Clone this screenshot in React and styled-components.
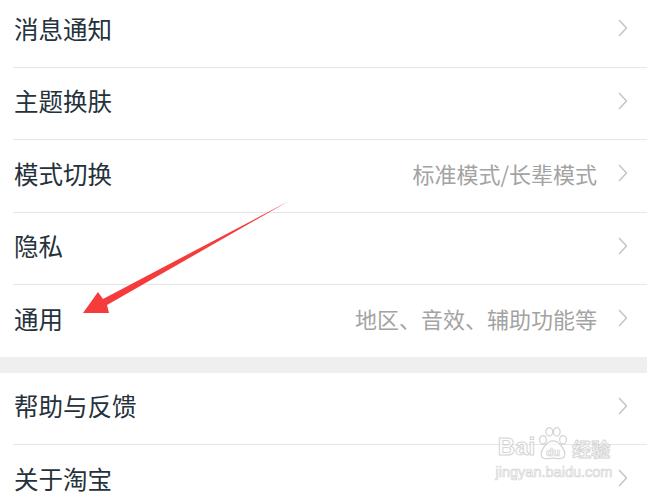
import React from 'react';
import styled, { createGlobalStyle } from 'styled-components';

const GlobalStyle = createGlobalStyle`
  html, body {
    margin: 0;
    padding: 0;
    background: #ffffff;
    overflow: hidden;
  }
  body {
    font-family: "Noto Sans CJK SC", "Noto Sans", sans-serif;
  }
`;

const Page = styled.div`
  position: relative;
  width: 647px;
  height: 498px;
  overflow: hidden;
  background: #ffffff;
`;

const List = styled.div`
  margin-top: -5px;
  display: flex;
  flex-direction: column;
`;

const Group = styled.div`
  display: flex;
  flex-direction: column;
  background: #ffffff;
`;

const Gap = styled.div`
  height: 16px;
  background: #efefef;
`;

const Row = styled.div`
  padding-left: 13px;
`;

const RowInner = styled.div`
  height: 66.5px;
  padding-bottom: 5px;
  display: flex;
  align-items: center;
  padding-right: 19px;
  border-bottom: ${p => (p.last ? 'none' : '1px solid #e6e6e6')};
  box-sizing: content-box;
`;

const Title = styled.span`
  flex: 1;
  font-size: 24.5px;
  color: #25313b;
  padding-left: 1px;
`;

const Hint = styled.span`
  font-size: 22px;
  color: #a3a3a3;
  margin-right: 21px;
`;

const Chevron = () => (
  <svg width="10" height="18" viewBox="0 0 10 18">
    <polyline points="1.5,1.5 8.5,9 1.5,16.5" fill="none" stroke="#c6c6c6" strokeWidth="1.6" strokeLinecap="round" strokeLinejoin="round" />
  </svg>
);

const Overlay = styled.svg`
  position: absolute;
  left: 0;
  top: 0;
  pointer-events: none;
`;

const Watermark = styled.div`
  position: absolute;
  left: 494px;
  top: 426px;
  width: 120px;
  display: flex;
  flex-direction: column;
  align-items: center;
  opacity: 0.7;
  pointer-events: none;
`;

const MarkTop = styled.div`
  display: flex;
  align-items: flex-end;
  font-family: "Liberation Sans", Arial, sans-serif;
  font-weight: 700;
  font-size: 24px;
  line-height: 1;
  color: #ffffff;
  -webkit-text-stroke: 1px #c4c4c4;
`;

const MarkCn = styled.span`
  font-family: "Noto Sans CJK SC", sans-serif;
  font-size: 19px;
  margin-left: 1px;
  margin-bottom: 1px;
`;

const MarkUrl = styled.div`
  margin-top: 5px;
  font-family: "Liberation Sans", Arial, sans-serif;
  font-size: 14.5px;
  color: #ffffff;
  -webkit-text-stroke: 0.7px #c4c4c4;
`;

const Paw = () => (
  <svg width="36" height="36" viewBox="0 0 34 34" style={{ marginBottom: -3 }}>
    <g fill="#fff" stroke="#c4c4c4" strokeWidth="1.2">
      <ellipse cx="7.5" cy="13" rx="3.2" ry="4" />
      <ellipse cx="13.5" cy="5.5" rx="3.2" ry="4" />
      <ellipse cx="20.5" cy="5.5" rx="3.2" ry="4" />
      <ellipse cx="26.5" cy="13" rx="3.2" ry="4" />
      <path d="M17 14 C11 14 5 23 6 28 C7 32 13 31 17 30 C21 31 27 32 28 28 C29 23 23 14 17 14 Z" />
    </g>
    <text x="17" y="28" textAnchor="middle" fontFamily="Liberation Sans, Arial, sans-serif" fontWeight="700" fontSize="11" fill="#fff" stroke="#c4c4c4" strokeWidth="0.7">du</text>
  </svg>
);

const topItems = [
  { title: '消息通知' },
  { title: '主题换肤' },
  { title: '模式切换', hint: '标准模式/长辈模式' },
  { title: '隐私' },
  { title: '通用', hint: '地区、音效、辅助功能等' },
];

const bottomItems = [
  { title: '帮助与反馈' },
  { title: '关于淘宝' },
];

const renderRows = items =>
  items.map((it, i) => (
    <Row key={it.title}>
      <RowInner last={i === items.length - 1}>
        <Title>{it.title}</Title>
        {it.hint && <Hint>{it.hint}</Hint>}
        <Chevron />
      </RowInner>
    </Row>
  ));

export default function App() {
  return (
    <Page>
      <GlobalStyle />
      <List>
        <Group>{renderRows(topItems)}</Group>
        <Gap />
        <Group>{renderRows(bottomItems)}</Group>
      </List>

      <Watermark>
        <MarkTop>
          <span>Bai</span>
          <Paw />
          <MarkCn>经验</MarkCn>
        </MarkTop>
        <MarkUrl>jingyan.baidu.com</MarkUrl>
      </Watermark>

      <Overlay width="647" height="498" viewBox="0 0 647 498">
        <polygon
          points="83,313 98,292 103,299 289,201 107,305 109,313"
          fill="#f53b3b"
        />
      </Overlay>
    </Page>
  );
}
